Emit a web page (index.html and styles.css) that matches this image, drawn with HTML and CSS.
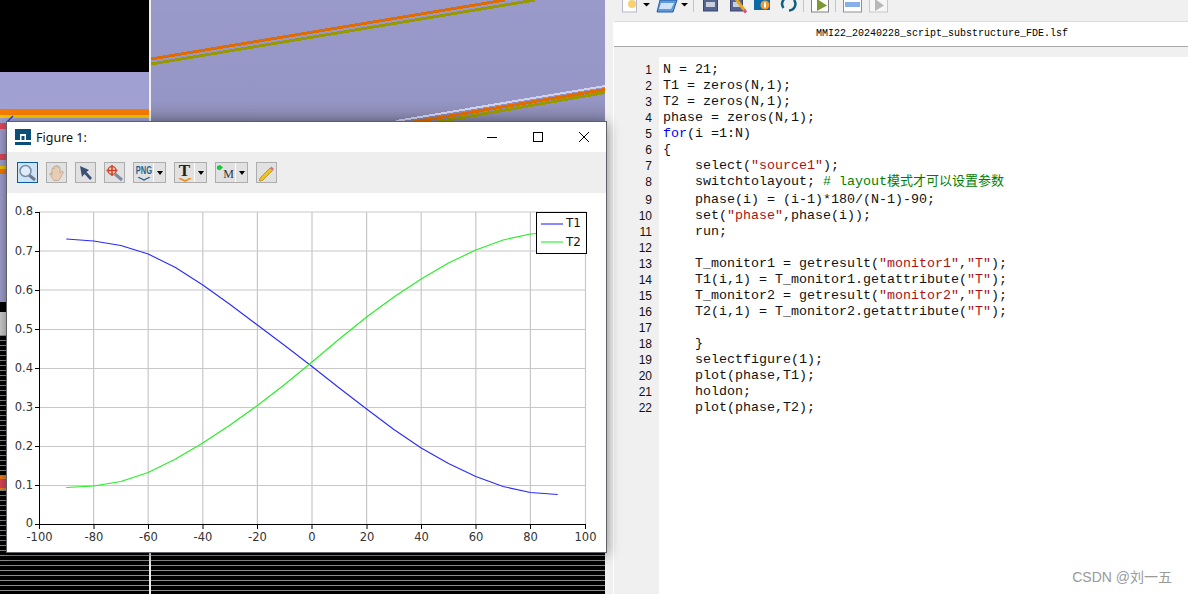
FILE: index.html
```html
<!DOCTYPE html>
<html lang="en">
<head>
    <meta charset="UTF-8">
    <title>Figure 1</title>
    <link rel="stylesheet" href="styles.css">
</head>
<body>
<div class="screen">
    <div class="scene">
        <!-- simulation view behind the figure window -->
        <svg class="scene-bg" width="605" height="594" viewBox="0 0 605 594">
            <defs>
                <pattern id="stripes" width="5" height="5" patternUnits="userSpaceOnUse">
                    <rect width="5" height="5" fill="#000"/>
                    <rect width="5" height="1" fill="#8c8c8c"/>
                </pattern>
                <linearGradient id="pane" x1="0" y1="0" x2="0" y2="1">
                    <stop offset="0" stop-color="#9a9aca"/>
                    <stop offset="0.82" stop-color="#9696c6"/>
                    <stop offset="1" stop-color="#8484a8"/>
                </linearGradient>
            </defs>
            <rect width="605" height="594" fill="#000"/>
            <rect x="0" y="72" width="149" height="230" fill="#a0a0d2"/>
            <rect x="0" y="109" width="149" height="6" fill="#f57c00"/>
            <rect x="0" y="115" width="149" height="3" fill="#f5c400"/>
            <rect x="0" y="123" width="7" height="6" fill="#e04858"/>
            <rect x="0" y="154" width="7" height="6" fill="#e04858"/>
            <rect x="0" y="166" width="7" height="3" fill="#f5c400"/>
            <rect x="0" y="169" width="7" height="5" fill="#f57c00"/>
            <path d="M7 122 L13 116" stroke="#2244cc" stroke-width="1.5"/>
            <rect x="0" y="302" width="149" height="10" fill="#000"/>
            <rect x="0" y="312" width="149" height="23" fill="#cfcfcf"/>
            <rect x="0" y="335" width="605" height="259" fill="url(#stripes)"/>
            <rect x="0" y="476" width="7" height="14" fill="#f08020"/>
            <rect x="0" y="479" width="7" height="9" fill="#e04858"/>
            <rect x="151" y="0" width="454" height="122" fill="url(#pane)"/>
            <g shape-rendering="crispEdges">
                <path d="M151 59 L505 0" stroke="#e06c00" stroke-width="3"/>
                <path d="M151 64 L535 0" stroke="#989800" stroke-width="3"/>
                <path d="M396 121 L605 86" stroke="#d0d0f0" stroke-width="2"/>
                <path d="M402 124 L605 89.500" stroke="#e06c00" stroke-width="3"/>
                <path d="M414 126 L605 92.500" stroke="#989800" stroke-width="3"/>
            </g>
            <rect x="149" y="0" width="2" height="594" fill="#eee"/>
        </svg>

        <div class="figure">
            <div class="titlebar">
                <svg class="logo" width="16" height="16" viewBox="0 0 16 16">
                    <path d="M0 0H16V11H11V5H5V11H0Z" fill="#0b4f78"/>
                    <rect x="6.5" y="7" width="3" height="4" fill="#0b4f78"/>
                    <rect y="13" width="16" height="3" fill="#0b4f78"/>
                </svg>
                <span class="title">Figure 1:</span>
                <div class="winctl">
                    <svg width="12" height="12" viewBox="0 0 12 12"><path d="M1 6.5H11" stroke="#000"/></svg>
                    <svg width="12" height="12" viewBox="0 0 12 12"><rect x="1.5" y="1.5" width="9" height="9" fill="none" stroke="#000"/></svg>
                    <svg width="12" height="12" viewBox="0 0 12 12"><path d="M1 1L11 11M11 1L1 11" stroke="#000"/></svg>
                </div>
            </div>
            <div class="fig-tools">
                <button class="tool active">
                    <svg width="19" height="18" viewBox="0 0 19 18">
                        <path d="M11 11L17 16" stroke="#6c7a90" stroke-width="3"/>
                        <circle cx="7.5" cy="7" r="5.5" fill="#dcecf8" stroke="#7c8ca4" stroke-width="1.5"/>
                    </svg>
                </button>
                <button class="tool">
                    <svg width="19" height="18" viewBox="0 0 19 18">
                        <path d="M5 11V5A1 1 0 0 1 7 5V3A1 1 0 0 1 9 3V2.500A1 1 0 0 1 11 2.500V3.500A1 1 0 0 1 13 4V9L14.500 7.500A1 1 0 0 1 16 9L13 14.500L11.500 16.500H7L5.500 14.500L3 10.500A1 1 0 0 1 5 9.500Z" fill="#e8cdb4" stroke="#b8a48e" stroke-width="0.800"/>
                    </svg>
                </button>
                <button class="tool">
                    <svg width="19" height="18" viewBox="0 0 19 18">
                        <path d="M4 2L13 6L10.500 8L16 14L14 16L8.500 10L6 13Z" fill="#3c4f78"/>
                    </svg>
                </button>
                <button class="tool">
                    <svg width="19" height="18" viewBox="0 0 19 18">
                        <path d="M10 10L17 16" stroke="#7c8ca4" stroke-width="3"/>
                        <circle cx="7" cy="6.500" r="4" fill="#e8d8d0" stroke="#d05030" stroke-width="1.500"/>
                        <path d="M7 1V12M1.500 6.500H12.500" stroke="#d04020" stroke-width="1.500"/>
                    </svg>
                </button>
                <button class="tool split">
                    <span class="tool-main">
                        <span class="png">PNG</span>
                        <svg class="chev" width="16" height="4" viewBox="0 0 16 4"><path d="M2 0L8 3L14 0" fill="none" stroke="#1f5f8f" stroke-width="1.200"/></svg>
                    </span>
                    <span class="caret"></span>
                </button>
                <button class="tool split">
                    <span class="tool-main">
                        <span class="big-t">T</span>
                        <svg class="chev" width="16" height="4" viewBox="0 0 16 4"><path d="M2 0L8 3L14 0" fill="none" stroke="#f09020" stroke-width="1.800"/></svg>
                    </span>
                    <span class="caret"></span>
                </button>
                <button class="tool split">
                    <span class="tool-main marker">
                        <svg width="6" height="6" viewBox="0 0 7 7"><path d="M0 1.500L3.500 0L7 2.500L3.500 6L0 5Z" fill="#10d030"/></svg>
                        <span class="big-m">M</span>
                    </span>
                    <span class="caret"></span>
                </button>
                <button class="tool">
                    <svg width="19" height="18" viewBox="0 0 19 18">
                        <path d="M3 14L13 4L15.500 6.500L5.500 16.500L2.500 17Z" fill="#f0c020" stroke="#a88018" stroke-width="0.700"/>
                        <path d="M13 4L14.500 2.500L17 5L15.500 6.500Z" fill="#d87090"/>
                    </svg>
                </button>
            </div>
            <svg class="plot" width="599" height="359" viewBox="7 193 599 359">
                <g class="grid">
                    <path d="M93.600 212V524M148.200 212V524M202.800 212V524M257.400 212V524M312 212V524M366.600 212V524M421.200 212V524M475.800 212V524M530.400 212V524M585.500 212V524"/>
                    <path d="M39 212H586M39 251H586M39 290H586M39 329.500H586M39 368.500H586M39 407.500H586M39 446.500H586M39 485.500H586"/>
                </g>
                <path class="axis" d="M39.500 212V524.500H586"/>
                <path class="axis" d="M35 212.500H39M35 251.500H39M35 290.500H39M35 329.500H39M35 368.500H39M35 407.500H39M35 446.500H39M35 485.500H39M35 524.500H39"/>
                <path class="axis" d="M39.500 524V529M94 524V529M148.500 524V529M203 524V529M257.500 524V529M312 524V529M367 524V529M421.500 524V529M476 524V529M530.500 524V529M585.500 524V529"/>
                <polyline class="t1" points="66.300,239 93.600,241 120.900,245.500 148.200,254 175.500,267.500 202.800,285 230.100,304.500 257.400,325 284.700,345.500 312,366.500 339.300,388 366.600,409 393.900,429.500 421.200,448 448.500,463.500 475.800,476.500 503.100,486.500 530.400,492.500 557.700,494.500"/>
                <polyline class="t2" points="66.300,487.500 93.600,486 120.900,481.500 148.200,472.500 175.500,459 202.800,443 230.100,425 257.400,405.500 284.700,384.500 312,362 339.300,339 366.600,317 393.900,297 421.200,279 448.500,263 475.800,250 503.100,240 530.400,234 557.700,232"/>
                <g class="ticks-y">
                    <text x="33" y="215">0.8</text>
                    <text x="33" y="254.500">0.7</text>
                    <text x="33" y="293.500">0.6</text>
                    <text x="33" y="332.500">0.5</text>
                    <text x="33" y="371.500">0.4</text>
                    <text x="33" y="410.500">0.3</text>
                    <text x="33" y="449.500">0.2</text>
                    <text x="33" y="488.500">0.1</text>
                    <text x="33" y="526.500">0</text>
                </g>
                <g class="ticks-x">
                    <text x="39.500" y="541">-100</text>
                    <text x="94" y="541">-80</text>
                    <text x="148.500" y="541">-60</text>
                    <text x="203" y="541">-40</text>
                    <text x="257.500" y="541">-20</text>
                    <text x="312" y="541">0</text>
                    <text x="367" y="541">20</text>
                    <text x="421.500" y="541">40</text>
                    <text x="476" y="541">60</text>
                    <text x="530.500" y="541">80</text>
                    <text x="585.500" y="541">100</text>
                </g>
                <rect class="legend" x="536.500" y="212.500" width="50" height="41"/>
                <path class="t1" d="M541 224H563"/>
                <path class="t2" d="M541 242H563"/>
                <text class="legend-text" x="566" y="227">T1</text>
                <text class="legend-text" x="566" y="246">T2</text>
            </svg>
        </div>
    </div>

    <div class="side">
        <svg class="main-tools" width="583" height="21" viewBox="605 0 583 21">
            <rect x="622.500" y="-2" width="14" height="14" fill="#fff" stroke="#b4b8c8"/>
            <circle cx="632" cy="4" r="4" fill="#f8d070"/>
            <path d="M643 3H650L646.500 6.500Z"/>
            <path d="M660 0H677L673 12H657Z" fill="#5b9be0" stroke="#2a5aa0"/>
            <path d="M661 3H674L671 9H659Z" fill="#cfe2f8"/>
            <path d="M681 3H688L684.500 6.500Z"/>
            <path d="M693.500 0V12M803.500 0V12M835.500 0V12" stroke="#c4c4c4"/>
            <rect x="703.500" y="-2" width="14" height="13" fill="#56648f" stroke="#3a4670"/>
            <rect x="706" y="2" width="9" height="5" fill="#c8d0e0"/>
            <rect x="730.500" y="-2" width="12" height="13" fill="#56648f" stroke="#3a4670"/>
            <rect x="733" y="2" width="7" height="5" fill="#c8d0e0"/>
            <path d="M736 -1L745 11" stroke="#e8a820" stroke-width="3"/>
            <path d="M744 10L746 12.500" stroke="#d85080" stroke-width="3"/>
            <rect x="754" y="-2" width="16" height="12" fill="#0a6aa8"/>
            <circle cx="765" cy="5" r="4.500" fill="#f09a30"/>
            <rect x="764" y="2.500" width="2" height="5" fill="#fff"/>
            <path d="M783.500 8A6.500 6.500 0 0 1 788 -2.500M794 0A6.500 6.500 0 0 1 789 10.500" fill="none" stroke="#0d5f80" stroke-width="2.500"/>
            <rect x="811.500" y="-2" width="17" height="14" fill="#fff" stroke="#808080"/>
            <path d="M817 -1L827 5.500L817 11Z" fill="#7a9a30"/>
            <rect x="843.500" y="-2" width="18" height="14" fill="#fff" stroke="#909090"/>
            <rect x="845" y="2" width="15" height="5" fill="#88b0e8"/>
            <rect x="869.500" y="-2" width="18" height="14" fill="#f6f6f6" stroke="#c8c8c8"/>
            <path d="M875 -1L884 5.500L875 11Z" fill="#b8b8b8"/>
        </svg>
        <div class="editor">
            <div class="tab">MMI22_20240228_script_substructure_FDE.lsf</div>
            <div class="code-area">
                <div class="gutter">
                    <div>1</div><div>2</div><div>3</div><div>4</div><div>5</div><div>6</div><div>7</div>
                    <div class="tall">8</div>
                    <div>9</div><div>10</div><div>11</div><div>12</div><div>13</div><div>14</div><div>15</div>
                    <div>16</div><div>17</div><div>18</div><div>19</div><div>20</div><div>21</div><div>22</div>
                </div>
                <div class="code">
                    <div>N = 21;</div>
                    <div>T1 = zeros(N,1);</div>
                    <div>T2 = zeros(N,1);</div>
                    <div>phase = zeros(N,1);</div>
                    <div><span class="kw">for</span>(i =1:N)</div>
                    <div>{</div>
                    <div>    select(<span class="str">"source1"</span>);</div>
                    <div class="tall">    switchtolayout; <span class="cmt"># layout<span class="cjk">模式才可以设置参数</span></span></div>
                    <div>    phase(i) = (i-1)*180/(N-1)-90;</div>
                    <div>    set(<span class="str">"phase"</span>,phase(i));</div>
                    <div>    run;</div>
                    <div>&nbsp;</div>
                    <div>    T_monitor1 = getresult(<span class="str">"monitor1"</span>,<span class="str">"T"</span>);</div>
                    <div>    T1(i,1) = T_monitor1.getattribute(<span class="str">"T"</span>);</div>
                    <div>    T_monitor2 = getresult(<span class="str">"monitor2"</span>,<span class="str">"T"</span>);</div>
                    <div>    T2(i,1) = T_monitor2.getattribute(<span class="str">"T"</span>);</div>
                    <div>&nbsp;</div>
                    <div>    }</div>
                    <div>    selectfigure(1);</div>
                    <div>    plot(phase,T1);</div>
                    <div>    holdon;</div>
                    <div>    plot(phase,T2);</div>
                </div>
            </div>
        </div>
        <div class="watermark">CSDN @刘一五</div>
    </div>
</div>
</body>
</html>
```

FILE: styles.css
```css
html, body {
    margin: 0;
    padding: 0;
    overflow: hidden;
}
.screen {
    display: flex;
    width: 1188px;
    height: 594px;
    overflow: hidden;
    background-color: #f0f0f0;
}
.scene {
    position: relative;
    width: 605px;
    height: 594px;
    flex: none;
}
.scene-bg {
    display: block;
}

/* figure window */
.figure {
    position: absolute;
    left: 6px;
    top: 121px;
    width: 599px;
    height: 430px;
    z-index: 2;
    display: flex;
    flex-direction: column;
    border: 1px solid #5f6068;
    background-color: #fff;
    box-shadow: 0 2px 12px rgba(0, 0, 0, 0.45);
}
.titlebar {
    height: 30px;
    flex: none;
    display: flex;
    align-items: center;
    padding-left: 8px;
}
.logo {
    margin-top: -1px;
}
.title {
    margin-left: 5px;
    font-family: "Noto Sans", sans-serif;
    font-size: 12.5px;
    color: #111;
}
.winctl {
    margin-left: auto;
    display: flex;
    gap: 34px;
    padding-right: 16px;
}
.winctl svg {
    display: block;
}
.fig-tools {
    height: 41px;
    flex: none;
    box-sizing: border-box;
    display: flex;
    align-items: flex-start;
    gap: 8px;
    padding: 10px 0 0 10px;
    background-color: #eeeeee;
}
.tool {
    width: 21px;
    height: 21px;
    box-sizing: border-box;
    padding: 0;
    flex: none;
    display: flex;
    align-items: center;
    justify-content: center;
    border: 1.5px solid #adadad;
    background-color: #e1e1e1;
}
.tool.active {
    border-color: #0a5a9c;
    background-color: #cde4f7;
}
.tool.split {
    width: 33px;
    justify-content: flex-start;
}
.tool-main {
    width: 20px;
    height: 100%;
    flex: none;
    box-sizing: border-box;
    display: flex;
    flex-direction: column;
    align-items: center;
    justify-content: center;
    border-right: 1px solid #fff;
    color: #000;
}
.chev {
    display: block;
    margin-top: 1px;
}
.png {
    font-family: "Liberation Sans", sans-serif;
    font-size: 11px;
    font-weight: bold;
    line-height: 11px;
    transform: scaleX(0.68);
    color: #1f5f8f;
}
.big-t {
    font-family: "Liberation Serif", serif;
    font-size: 17px;
    font-weight: bold;
    line-height: 13px;
    color: #222;
}
.marker {
    flex-direction: row;
    align-items: flex-start;
    padding-top: 2px;
}
.big-m {
    font-family: "Liberation Serif", serif;
    font-size: 12px;
    line-height: 11px;
    margin-top: 4px;
    color: #333;
}
.caret {
    width: 0;
    height: 0;
    margin-left: 3px;
    border-left: 3.5px solid transparent;
    border-right: 3.5px solid transparent;
    border-top: 4px solid #000;
}

/* plot */
.plot {
    display: block;
    flex: none;
}
.grid path {
    fill: none;
    stroke: #c8c8c8;
    stroke-width: 1.2;
}
.axis {
    fill: none;
    stroke: #000;
    stroke-width: 1;
}
.t1 {
    fill: none;
    stroke: #2a2aff;
    stroke-width: 1.1;
    stroke-linejoin: round;
}
.t2 {
    fill: none;
    stroke: #22f022;
    stroke-width: 1.1;
    stroke-linejoin: round;
}
.plot text {
    font-family: "DejaVu Sans", sans-serif;
    font-size: 11.5px;
    fill: #333;
}
.ticks-y text {
    text-anchor: end;
}
.ticks-x text {
    text-anchor: middle;
}
.legend {
    fill: #fff;
    stroke: #000;
    stroke-width: 1;
}
.plot .legend-text {
    font-size: 12px;
    fill: #111;
}

/* editor side */
.side {
    position: relative;
    flex: 1;
    min-width: 0;
    display: flex;
    flex-direction: column;
}
.main-tools {
    display: block;
    flex: none;
    fill: #000;
}
.editor {
    flex: 1;
    min-height: 0;
    margin-left: 8px;
    border-left: 1px solid #fff;
    display: flex;
    flex-direction: column;
}
.tab {
    height: 26px;
    flex: none;
    box-sizing: border-box;
    padding-left: 82px;
    border-top: 1px solid #dcdcdc;
    border-bottom: 1px solid #a8a8a8;
    background-color: #fff;
    text-align: center;
    line-height: 24px;
    font-family: "Liberation Mono", monospace;
    font-size: 10px;
    color: #000;
}
.code-area {
    flex: 1;
    min-height: 0;
    margin-top: 10px;
    display: flex;
    font-family: "Liberation Mono", "Noto Sans CJK SC", monospace;
    font-size: 13.33px;
    line-height: 16px;
    color: #111;
}
.gutter {
    width: 38px;
    padding: 5px 7px 0 0;
    flex: none;
    text-align: right;
    font-family: "Liberation Sans", sans-serif;
    font-size: 12px;
}
.code {
    flex: 1;
    padding: 5px 0 0 4px;
    background-color: #fff;
}
.code div {
    white-space: pre;
}
.gutter .tall,
.code .tall {
    height: 18px;
}
.kw {
    color: #0000ff;
}
.str {
    color: #b01010;
}
.cmt {
    color: #008000;
}
.cjk {
    font-size: 13px;
}
.watermark {
    position: absolute;
    right: 16px;
    bottom: 8px;
    font-family: "Liberation Sans", "Noto Sans CJK SC", sans-serif;
    font-size: 14px;
    color: #9a9a9a;
}
```
